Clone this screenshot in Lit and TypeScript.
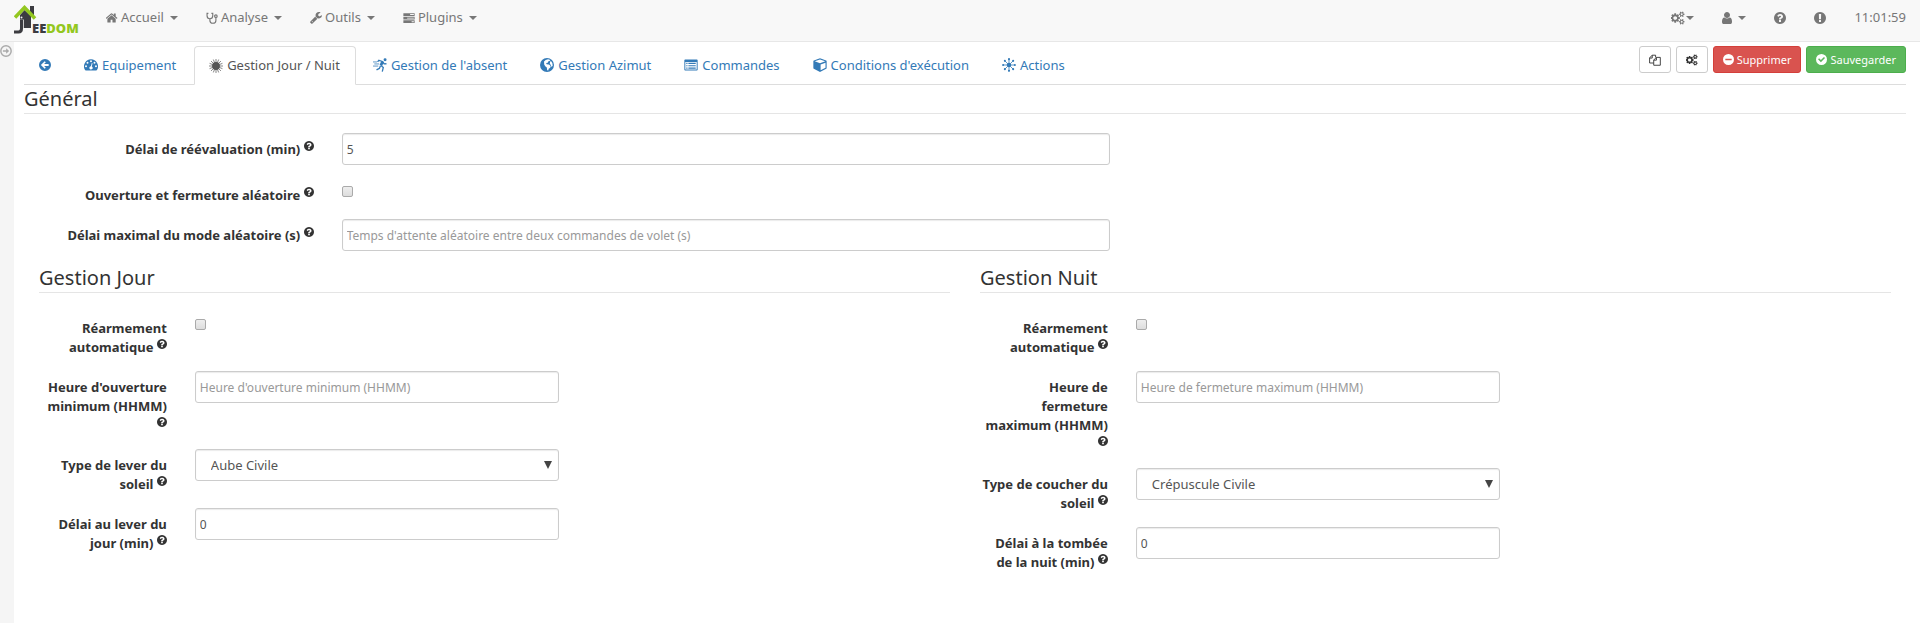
import { LitElement, html, svg, css } from "lit";
import { customElement, property } from "lit/decorators.js";

const question = svg`<path d="M1024 1376v-192q0-14-9-23t-23-9h-192q-14 0-23 9t-9 23v192q0 14 9 23t23 9h192q14 0 23-9t9-23zm256-672q0-88-55.5-163t-138.5-116-170-41q-243 0-371 213-15 24 8 42l132 100q7 6 19 6 16 0 25-12 53-68 86-92 34-24 86-24 48 0 85.5 26t37.5 59q0 38-20 61t-68 45q-63 28-115.5 86.5t-52.5 125.5v36q0 14 9 23t23 9h192q14 0 23-9t9-23q0-19 21.5-49.5t54.5-49.5q32-18 49-28.5t46-35 44.5-48 28-60.5 12.5-81zm384 192q0 209-103 385.5t-279.5 279.5-385.5 103-385.5-103-279.5-279.5-103-385.5 103-385.5 279.5-279.5 385.5-103 385.5 103 279.5 279.5 103 385.5z"/>`;

const rays = (count: number, from: number, to: number, width: number) =>
  Array.from({ length: count }, (_, i) => {
    const a = (i * 2 * Math.PI) / count;
    const c = Math.cos(a), s = Math.sin(a);
    return svg`<line x1=${8 + from * c} y1=${8 + from * s} x2=${8 + to * c} y2=${8 + to * s} stroke="currentColor" stroke-width=${width}/>`;
  });

const icons: Record<string, { box: string; art: unknown }> = {
  question: { box: "128 128 1536 1536", art: question },
  exclamation: {
    box: "128 128 1536 1536",
    art: svg`<path d="M896 128q209 0 385.5 103t279.5 279.5 103 385.5-103 385.5-279.5 279.5-385.5 103-385.5-103-279.5-279.5-103-385.5 103-385.5 279.5-279.5 385.5-103zm128 1247v-190q0-14-9-23.5t-22-9.5h-192q-13 0-23 10t-10 23v190q0 13 10 23t23 10h192q13 0 22-9.5t9-23.5zm-2-344l18-621q0-12-10-18-10-8-24-8h-220q-14 0-24 8-10 6-10 18l17 621q0 10 10 17.5t24 7.5h185q14 0 23.5-7.5t10.5-17.5z"/>`,
  },
  home: {
    box: "64 128 1664 1536",
    art: svg`<path d="M1408 992v480q0 26-19 45t-45 19h-384v-384h-256v384h-384q-26 0-45-19t-19-45v-480q0-1 .5-3t.5-3l575-474 575 474q1 2 1 6zm223-69l-62 74q-8 9-21 11h-3q-13 0-21-7l-692-577-692 577q-12 8-24 7-13-2-21-11l-62-74q-8-10-7-23.5t11-21.5l719-599q32-26 76-26t76 26l244 204v-195q0-14 9-23t23-9h192q14 0 23 9t9 23v408l219 182q10 8 11 21.5t-7 23.5z"/>`,
  },
  wrench: {
    box: "64 128 1664 1664",
    art: svg`<path d="M448 1472q0-26-19-45t-45-19-45 19-19 45 19 45 45 19 45-19 19-45zm644-420l-682 682q-37 37-90 37-52 0-91-37l-106-108q-38-36-38-90 0-53 38-91l681-681q39 98 114.5 173.5t173.5 114.5zm634-435q0 39-23 106-47 134-164.5 217.5t-258.5 83.5q-185 0-316.5-131.5t-131.5-316.5 131.5-316.5 316.5-131.5q58 0 121.5 16.5t107.5 46.5q16 11 16 28t-16 28l-293 169v224l193 107q5-3 79-48.5t135.5-81 70.5-35.5q15 0 23.5 10t8.5 25z"/>`,
  },
  user: {
    box: "256 128 1280 1536",
    art: svg`<path d="M1536 1399q0 109-62.5 187t-150.5 78h-854q-88 0-150.5-78t-62.5-187q0-85 8.5-160.5t31.5-152 58.5-131 94-89 134.5-34.5q131 128 313 128t313-128q76 0 134.5 34.5t94 89 58.5 131 31.5 152 8.5 160.5zm-256-887q0 159-112.5 271.5t-271.5 112.5-271.5-112.5-112.5-271.5 112.5-271.5 271.5-112.5 271.5 112.5 112.5 271.5z"/>`,
  },
  cogs: {
    box: "0 0 1920 1792",
    art: svg`<path d="M832 896q0-106-75-181t-181-75-181 75-75 181 75 181 181 75 181-75 75-181zm768 512q0-52-38-90t-90-38-90 38-38 90q0 53 37.5 90.5t90.5 37.5 90.5-37.5 37.5-90.5zm0-1024q0-52-38-90t-90-38-90 38-38 90q0 53 37.5 90.5t90.5 37.5 90.5-37.5 37.5-90.5zm-384 421v185q0 10-7 19.5t-16 10.5l-155 24q-11 35-32 76 34 48 90 115 7 11 7 20 0 12-7 19-23 30-82.5 89.5t-78.5 59.5q-11 0-21-7l-115-90q-37 19-77 31-11 108-23 155-7 24-30 24h-186q-11 0-20-7.5t-10-17.5l-23-153q-34-10-75-31l-118 89q-7 7-20 7-11 0-21-8-144-133-144-160 0-9 7-19 10-14 41-53t47-61q-23-44-35-82l-152-24q-10-1-17-9.5t-7-19.5v-185q0-10 7-19.5t16-10.5l155-24q11-35 32-76-34-48-90-115-7-11-7-20 0-12 7-20 22-30 82-89t79-59q11 0 21 7l115 90q34-18 77-32 11-108 23-154 7-24 30-24h186q11 0 20 7.5t10 17.5l23 153q34 10 75 31l118-89q8-7 20-7 11 0 21 8 144 133 144 160 0 8-7 19-12 16-42 54t-45 60q23 48 34 82l152 23q10 2 17 10.5t7 19.5zm640 533v140q0 16-149 31-12 27-30 52 51 113 51 138 0 4-4 7-122 71-124 71-8 0-46-47t-52-68q-20 2-30 2t-30-2q-14 21-52 68t-46 47q-2 0-124-71-4-3-4-7 0-25 51-138-18-25-30-52-149-15-149-31v-140q0-16 149-31 13-29 30-52-51-113-51-138 0-4 4-7 4-2 35-20t59-34 30-16q8 0 46 46.5t52 67.5q20-2 30-2t30 2q51-71 92-112l6-2q4 0 124 70 4 3 4 7 0 25-51 138 17 23 30 52 149 15 149 31zm0-1024v140q0 16-149 31-12 27-30 52 51 113 51 138 0 4-4 7-122 71-124 71-8 0-46-47t-52-68q-20 2-30 2t-30-2q-14 21-52 68t-46 47q-2 0-124-71-4-3-4-7 0-25 51-138-18-25-30-52-149-15-149-31v-140q0-16 149-31 13-29 30-52-51-113-51-138 0-4 4-7 4-2 35-20t59-34 30-16q8 0 46 46.5t52 67.5q20-2 30-2t30 2q51-71 92-112l6-2q4 0 124 70 4 3 4 7 0 25-51 138 17 23 30 52 149 15 149 31z"/>`,
  },
  stethoscope: {
    box: "0 0 16 16",
    art: svg`<g fill="none" stroke="currentColor" stroke-width="1.5"><path d="M3.2 1.8H1.4V5c0 2.4 1.500 4 3.800 4S9 7.400 9 5V1.800H7.200M5.200 9v2.200c0 2.400 1.600 3.800 4 3.800s4-1.400 4-3.800V7.500"/><circle cx="13.2" cy="5.5" r="1.7"/></g>`,
  },
  tasks: {
    box: "0 0 16 16",
    art: svg`<path fill-rule="evenodd" d="M.5 1.500h15v3.700H.5zM9.500 2.800v1.100h5V2.800zM.5 6.300h15V10H.5zM5.500 7.600v1.100h9V7.600zM.5 11.100h15v3.700H.5zM11.500 12.400v1.100h3v-1.100z"/>`,
  },
  back: {
    box: "0 0 16 16",
    art: svg`<path fill-rule="evenodd" d="M8 0a8 8 0 1 0 0 16A8 8 0 0 0 8 0zM7.600 2.900l1.500 1.500L6.800 6.800h6.100v2.400H6.800l2.300 2.400-1.500 1.500L2.500 8z"/>`,
  },
  forward: {
    box: "0 0 16 16",
    art: svg`<circle cx="8" cy="8" r="6.900" fill="none" stroke="currentColor" stroke-width="1.900"/><path d="M3.900 6.900h4.300V4.400L12.200 8l-4 3.600V9.100H3.900z"/>`,
  },
  dashboard: {
    box: "0 0 16 14",
    art: svg`<path fill-rule="evenodd" d="M8 .5a8 8 0 0 0-6.800 12.200q.3.500.8.500h12q.5 0 .8-.500A8 8 0 0 0 8 .5zM8 1.700a1.100 1.100 0 1 1 0 2.200 1.100 1.100 0 0 1 0-2.200zM4 3.400a1.100 1.100 0 1 1 0 2.200 1.100 1.100 0 0 1 0-2.200zM12 3.400a1.100 1.100 0 1 1 0 2.200 1.100 1.100 0 0 1 0-2.200zM2.300 7.400a1.100 1.100 0 1 1 0 2.200 1.100 1.100 0 0 1 0-2.200zM13.700 7.400a1.100 1.100 0 1 1 0 2.200 1.100 1.100 0 0 1 0-2.200zM8.900 4.700l.9.300-.9 3.600a1.900 1.900 0 1 1-1-.2z"/>`,
  },
  sunSolid: { box: "0 0 16 16", art: svg`<circle cx="8" cy="8" r="4.500"/>${rays(16, 4, 8, 0.8)}` },
  sunDots: {
    box: "0 0 16 16",
    art: svg`<circle cx="8" cy="8" r="2.600"/>${rays(8, 2, 6.6, 0.9)}${Array.from({ length: 8 }, (_, i) => {
      const a = (i * Math.PI) / 4;
      return svg`<circle cx=${8 + 6.7 * Math.cos(a)} cy=${8 + 6.7 * Math.sin(a)} r="1.200"/>`;
    })}`,
  },
  runner: {
    box: "0 0 16 16",
    art: svg`<circle cx="13.800" cy="1.900" r="1.700"/><g fill="none" stroke="currentColor" stroke-linejoin="round"><path stroke-width="3.200" d="M11 4L9 8.400"/><path stroke-width="1.500" d="M15.400 6.600l-2.700.2L11 4 6.800 2.600 5.200 4.400M9 8.600l2.800 2.200-1.200 4.800M8.600 8.700L7.400 11.800 4 13.600"/><path stroke-width=".9" d="M0 4.500h4.500M1.500 6.800H7M0 9.200h6"/></g>`,
  },
  globe: {
    box: "0 0 16 16",
    art: svg`<path fill-rule="evenodd" d="M8 0a8 8 0 1 0 0 16A8 8 0 0 0 8 0zM6.500 2.200l2.700-.9 2.700.9-1 1.200-1.600.5-.4 1.400-1.900.4.600 1.500 2.700.3 1.900 1.600-.5 2-1.700 1.100-.6 2-1.200-.2-.4-3.200L6 9.300 4.800 7.500 4.600 4zM11.500 4.300l1-1 1.600 2.500.4 3-1.400 1.600-.7-2.400-1.200-1.400z"/>`,
  },
  list: {
    box: "0 0 16 14",
    art: svg`<path fill-rule="evenodd" d="M1.300.8h13.400q.9 0 .9.900v10.600q0 .9-.9.900H1.300q-.9 0-.9-.9V1.700q0-.9.9-.9zM1.500 3.600v8.500h13V3.600z"/><path d="M2.600 4.500H4v1.300H2.600zM5 4.500h8.400v1.300H5zM2.600 7.200H4v1.300H2.600zM5 7.200h8.400v1.300H5zM2.600 9.900H4v1.300H2.600zM5 9.900h8.400v1.300H5z"/>`,
  },
  cube: {
    box: "0 0 16 16",
    art: svg`<path fill-rule="evenodd" d="M8 .2l7 2.600q.6.300.6.900v7.800q0 .6-.5.900l-6.600 3.400q-.5.200-1 0L.9 12.400q-.5-.3-.5-.9V3.700q0-.6.6-.9zM8 1.600L2 3.800 8 6l6-2.200zM8.700 7.400v6.500l5.600-2.900V5.300z"/>`,
  },
  files: {
    box: "0 0 16 16",
    art: svg`<g fill="none" stroke="currentColor" stroke-width="1.200" stroke-linejoin="round"><path d="M6.200 12H.8V5.200L4.200 1.600h4.600v3M4.300 1.800v3.600H1M6.300 15V8l3.500-3.500h5.300V15zM9.900 4.700v3.500H6.500"/></g>`,
  },
  minus: {
    box: "0 0 16 16",
    art: svg`<path fill-rule="evenodd" d="M8 0a8 8 0 1 0 0 16A8 8 0 0 0 8 0zM3.400 6.800h9.200v2.400H3.400z"/>`,
  },
  check: {
    box: "0 0 16 16",
    art: svg`<path fill-rule="evenodd" d="M8 0a8 8 0 1 0 0 16A8 8 0 0 0 8 0zM11.600 4.400l1.500 1.500-6 6L3 7.800l1.500-1.500 2.600 2.600z"/>`,
  },
};

@customElement("j-icon")
export class JIcon extends LitElement {
  @property() name = "question";
  static styles = css`
    :host { display: inline-block; width: 13px; height: 13px; line-height: 0; }
    svg { display: block; width: 100%; height: 100%; fill: currentColor; }
  `;
  render() {
    const icon = icons[this.name];
    return html`<svg viewBox=${icon.box} aria-hidden="true">${icon.art}</svg>`;
  }
}

interface Field {
  id: string;
  label: string;
  kind: "text" | "check" | "select";
  value?: string;
  hint?: string;
}

const general: Field[] = [
  { id: "reeval", label: "Délai de réévaluation (min)", kind: "text", value: "5" },
  { id: "random", label: "Ouverture et fermeture aléatoire", kind: "check" },
  { id: "randomMax", label: "Délai maximal du mode aléatoire (s)", kind: "text", hint: "Temps d'attente aléatoire entre deux commandes de volet (s)" },
];
const day: Field[] = [
  { id: "dayRearm", label: "Réarmement automatique", kind: "check" },
  { id: "dayHour", label: "Heure d'ouverture minimum (HHMM)", kind: "text", hint: "Heure d'ouverture minimum (HHMM)" },
  { id: "dayType", label: "Type de lever du soleil", kind: "select", value: "Aube Civile" },
  { id: "dayDelay", label: "Délai au lever du jour (min)", kind: "text", value: "0" },
];
const night: Field[] = [
  { id: "nightRearm", label: "Réarmement automatique", kind: "check" },
  { id: "nightHour", label: "Heure de fermeture maximum (HHMM)", kind: "text", hint: "Heure de fermeture maximum (HHMM)" },
  { id: "nightType", label: "Type de coucher du soleil", kind: "select", value: "Crépuscule Civile" },
  { id: "nightDelay", label: "Délai à la tombée de la nuit (min)", kind: "text", value: "0" },
];
const menus = [
  ["home", "Accueil"],
  ["stethoscope", "Analyse"],
  ["wrench", "Outils"],
  ["tasks", "Plugins"],
];
const tabs = [
  ["back", ""],
  ["dashboard", "Equipement"],
  ["sunSolid", "Gestion Jour / Nuit"],
  ["runner", "Gestion de l'absent"],
  ["globe", "Gestion Azimut"],
  ["list", "Commandes"],
  ["cube", "Conditions d'exécution"],
  ["sunDots", "Actions"],
];

@customElement("app-root")
export class AppRoot extends LitElement {
  static styles = css`
    :host {
      display: flex; flex-direction: column; min-height: 100vh; background: #fff;
      font: 13px/19px "Noto Sans", "Open Sans", sans-serif; color: #333;
    }
    * { box-sizing: border-box; }
    a { text-decoration: none; color: inherit; }
    .navbar {
      display: flex; align-items: center; height: 42px; padding: 0 14px;
      background: #f8f8f8; border-bottom: 1px solid #e7e7e7; color: #777;
    }
    .logo { display: block; width: 66px; height: 32px; }
    .logo text { font: 800 13px "Open Sans", sans-serif; }
    .menus { display: flex; gap: 28px; padding: 0 0 6px 26px; }
    .menus a, .tools a { display: flex; align-items: center; gap: 3px; }
    .menus j-icon, .tools j-icon { width: 12px; height: 12px; }
    .caret { border: 4px solid transparent; border-top-color: currentColor; border-bottom: 0; margin-left: 3px; }
    .tools { display: flex; align-items: center; gap: 28px; margin-left: auto; padding-bottom: 6px; }
    .tools .wide { width: 14px; height: 14px; }
    .tools .narrow { width: 10px; }
    .tools .wide + .caret { margin-left: -2px; }
    .body { display: flex; flex: 1; }
    .side { width: 14px; background: #f5f5f5; color: #aaa; padding-top: 3px; flex: none; }
    .side button { display: block; border: 0; padding: 0; background: none; color: inherit; width: 12px; height: 12px; }
    .side j-icon { width: 12px; height: 12px; display: block; }
    main { flex: 1; min-width: 0; padding: 4px 14px 0 10px; }
    .top { display: flex; justify-content: space-between; align-items: flex-start; border-bottom: 1px solid #ddd; height: 39px; }
    .tabs { display: flex; gap: 2px; }
    .tab {
      display: flex; align-items: center; gap: 4px; height: 38px; padding: 0 15px 0 14px;
      border: 1px solid transparent; border-radius: 4px 4px 0 0; color: #337ab7;
    }
    .tab j-icon { width: 14px; height: 14px; }
    .tab j-icon:only-child { width: 12px; height: 12px; }
    .tab.active { height: 39px; background: #fff; border-color: #ddd; border-bottom-color: #fff; color: #555; }
    .actions { display: flex; gap: 5px; }
    .btn {
      display: flex; align-items: center; gap: 3px; height: 27px; padding: 0 9px; border-radius: 3px;
      border: 1px solid #ccc; background: #fff; color: #333; font: 11px/16px "Noto Sans", sans-serif;
    }
    .btn j-icon { width: 12px; height: 12px; }
    .danger j-icon, .success j-icon { width: 11px; height: 11px; }
    .danger { background: #d9534f; border-color: #d43f3a; color: #fff; }
    .success { background: #5cb85c; border-color: #4cae4c; color: #fff; }
    fieldset { border: 0; margin: 0; padding: 0; min-width: 0; }
    legend {
      display: block; width: 100%; padding: 0; margin: 0 0 19px; border-bottom: 1px solid #e5e5e5;
      font-size: 20px; line-height: 28px;
    }
    .form { display: flex; flex-direction: column; gap: 14px; margin: 0 -15px; }
    .row { display: grid; grid-template-columns: repeat(12, minmax(0, 1fr)); align-items: start; }
    .lab { grid-column: span 2; padding: 7px 14px 0 16px; text-align: right; font-weight: 700; }
    .lab j-icon { width: 10px; height: 10px; vertical-align: 3px; }
    .field { grid-column: span 5; padding: 0 14px; }
    .field input[type="text"], .field select {
      display: block; width: 100%; height: 32px; margin: 0; padding: 0 4px; border: 1px solid #ccc;
      border-radius: 3px; background: #fff; color: #555; font: 12px/18px "Noto Sans", sans-serif;
      box-shadow: inset 0 1px 1px rgba(0, 0, 0, 0.08); outline: 0;
    }
    .field input::placeholder { color: #999; opacity: 1; }
    .pick { display: grid; align-items: center; }
    .pick > * { grid-area: 1 / 1; }
    .field .pick select { appearance: none; padding: 0 15px; font-size: 13px; }
    .arrow {
      justify-self: end; margin-right: 7px; border: 4px solid transparent;
      border-top: 8px solid #444; border-bottom: 0; pointer-events: none;
    }
    .field input[type="checkbox"] {
      appearance: none; display: block; width: 11px; height: 11px; margin: 7px 0 0;
      border: 1px solid #aaa; border-radius: 2px; background: linear-gradient(#eee, #ddd);
    }
    .halves { display: grid; grid-template-columns: 1fr 1fr; }
    .half { padding: 13px 15px 0; }
  `;

  private control(f: Field) {
    if (f.kind === "check") return html`<input type="checkbox" id=${f.id} />`;
    if (f.kind === "select")
      return html`<div class="pick">
        <select id=${f.id}><option>${f.value}</option></select><span class="arrow"></span>
      </div>`;
    return html`<input type="text" id=${f.id} .value=${f.value ?? ""} placeholder=${f.hint ?? ""} />`;
  }

  private form(title: string, fields: Field[]) {
    return html`<fieldset>
      <legend>${title}</legend>
      <div class="form">
        ${fields.map(
          (f) => html`<div class="row">
            <label class="lab" for=${f.id}>${f.label} <j-icon name="question"></j-icon></label>
            <div class="field">${this.control(f)}</div>
          </div>`
        )}
      </div>
    </fieldset>`;
  }

  render() {
    return html`
      <nav class="navbar">
        <a href="#" aria-label="Jeedom">
          <svg class="logo" viewBox="0 0 66 32">
            <path fill="#3c3c41" d="M16 1h4v10l-4-3zM10.500 5l6.500 6v12H6V10z" />
            <path fill="none" stroke="#f8f8f8" stroke-width="4.500" d="M7.500 14.500v9q0 3.500-3 3.500H1" />
            <path fill="none" stroke="#3c3c41" stroke-width="3" d="M7.500 14.500v9q0 3.500-3 3.500H0" />
            <circle cx="7.500" cy="12.500" r="1" fill="#f8f8f8" />
            <path fill="none" stroke="#93c720" stroke-width="3.500" d="M1 12.500L10.500 2.500l10.500 11" />
            <text x="18" y="28" fill="#3c3c41">EE<tspan fill="#93c720">DOM</tspan></text>
          </svg>
        </a>
        <div class="menus">
          ${menus.map(([icon, text]) => html`<a href="#"><j-icon name=${icon}></j-icon>${text}<span class="caret"></span></a>`)}
        </div>
        <div class="tools">
          <a href="#" aria-label="Réglages"><j-icon class="wide" name="cogs"></j-icon><span class="caret"></span></a>
          <a href="#" aria-label="Utilisateur"><j-icon class="narrow" name="user"></j-icon><span class="caret"></span></a>
          <a href="#" aria-label="Aide"><j-icon name="question"></j-icon></a>
          <a href="#" aria-label="Messages"><j-icon name="exclamation"></j-icon></a>
          <span>11:01:59</span>
        </div>
      </nav>
      <div class="body">
        <aside class="side"><button aria-label="Ouvrir le panneau"><j-icon name="forward"></j-icon></button></aside>
        <main>
          <div class="top">
            <div class="tabs">
              ${tabs.map(
                ([icon, text], i) => html`<a href="#" class="tab ${i === 2 ? "active" : ""}" aria-label=${text || "Retour"}
                  ><j-icon name=${icon}></j-icon>${text ? html`<span>${text}</span>` : ""}</a>`
              )}
            </div>
            <div class="actions">
              <button class="btn" aria-label="Dupliquer"><j-icon name="files"></j-icon></button>
              <button class="btn" aria-label="Configuration"><j-icon name="cogs"></j-icon></button>
              <button class="btn danger"><j-icon name="minus"></j-icon>Supprimer</button>
              <button class="btn success"><j-icon name="check"></j-icon>Sauvegarder</button>
            </div>
          </div>
          ${this.form("Général", general)}
          <div class="halves">
            <div class="half">${this.form("Gestion Jour", day)}</div>
            <div class="half">${this.form("Gestion Nuit", night)}</div>
          </div>
        </main>
      </div>
    `;
  }
}
